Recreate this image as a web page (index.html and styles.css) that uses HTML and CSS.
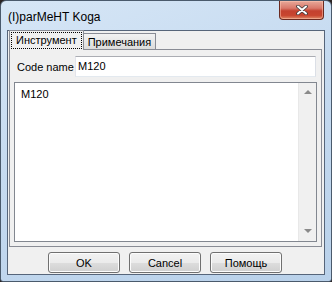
FILE: index.html
```html
<!DOCTYPE html>
<html lang="ru">
<head>
    <meta charset="UTF-8">
    <title>(I)parMeHT Koga</title>
    <link rel="stylesheet" href="styles.css">
</head>
<body>
    <div class="window">
        <div class="titlebar">
            <span class="title">(I)parMeHT Koga</span>
            <div class="close-btn">
                <svg width="12" height="10" viewBox="0 0 12 10">
                    <path d="M2 1.5 L10 8.5 M10 1.5 L2 8.5" stroke="#3b3b3b" stroke-width="3.6" stroke-linecap="round"/>
                    <path d="M2 1.5 L10 8.5 M10 1.5 L2 8.5" stroke="#ffffff" stroke-width="2" stroke-linecap="round"/>
                </svg>
            </div>
        </div>
        <div class="client">
            <div class="tabs">
                <div class="tab active"><span class="focus">Инструмент</span></div>
                <div class="tab">Примечания</div>
            </div>
            <div class="pane">
                <div class="field-row">
                    <label class="label">Code name</label>
                    <div class="edit">M120</div>
                </div>
                <div class="memo">
                    <div class="memo-text">M120</div>
                    <div class="scrollbar">
                        <span class="arrow up"></span>
                        <span class="arrow down"></span>
                    </div>
                </div>
            </div>
            <div class="buttons">
                <button class="btn">OK</button>
                <button class="btn">Cancel</button>
                <button class="btn">Помощь</button>
            </div>
        </div>
    </div>
</body>
</html>
```
FILE: styles.css
```css
html {
    background-color: #2b2424; /* desktop behind the corners */
}

body {
    margin: 0;
    padding: 0;
    font-family: "Liberation Sans", Arial, sans-serif;
    font-size: 11px;
    color: #000;
}

.window {
    width: 330px;
    height: 280px;
    border: 1px solid #4a5a6c;
    border-radius: 6px 6px 3px 3px;
    background: linear-gradient(160deg, #d6e6f6 0%, #c5daf0 45%, #b9d1ea 100%);
    display: flex;
    flex-direction: column;
}

.titlebar {
    height: 29px;
    display: flex;
    justify-content: space-between;
    align-items: flex-start;
}

.title {
    font-size: 12px;
    margin: 9px 0 0 7px;
    color: #000;
}

.close-btn {
    width: 43px;
    height: 18px;
    margin-right: 7px;
    border: 1px solid #6b2a20;
    border-top: none;
    border-radius: 0 0 4px 4px;
    background: linear-gradient(to bottom, #e8a999 0%, #d9786a 40%, #c3412f 55%, #c8452f 80%, #de8a67 100%);
    display: flex;
    justify-content: center;
    align-items: center;
    box-shadow: inset 0 0 0 1px rgba(255, 200, 180, 0.5);
}

.client {
    width: 316px;
    height: 243px;
    margin-left: 6px;
    border: 1px solid #56657a;
    background-color: #f0f0f0;
    display: flex;
    flex-direction: column;
}

.tabs {
    display: flex;
    align-items: flex-end;
    height: 18px;
    margin-left: 1px;
    position: relative;
    z-index: 1;
}

.tab {
    height: 15px;
    padding: 0 4px;
    border: 1px solid #898c95;
    border-bottom: none;
    background: linear-gradient(to bottom, #f2f2f2, #dcdcdc);
    display: flex;
    align-items: center;
    font-size: 11px;
    margin-left: -1px;
}

.tab.active {
    height: 19px;
    margin-bottom: -1px;
    margin-left: 0;
    padding: 0 1px;
    background: #f0f0f0;
}

.focus {
    border: 1px dotted #000;
    padding: 0 4px 1px 4px;
    line-height: 14px;
}

.pane {
    margin: 0 2px 0 1px;
    border: 1px solid #898c95;
    background-color: #f0f0f0;
    display: flex;
    flex-direction: column;
    padding: 6px 4px 4px 4px;
    box-sizing: border-box;
    height: 198px;
}

.field-row {
    display: flex;
    align-items: center;
    height: 21px;
}

.label {
    width: 58px;
    padding-left: 3px;
    white-space: nowrap;
    font-size: 11px;
}

.edit {
    flex: 1;
    height: 19px;
    margin-right: 1px;
    border: 1px solid #abadb3;
    border-color: #abadb3 #dbdfe6 #e3e9ef #e2e3ea;
    background-color: #fff;
    font-size: 11px;
    line-height: 19px;
    padding-left: 2px;
}

.memo {
    flex: 1;
    margin-top: 5px;
    border: 1px solid #828790;
    background-color: #fff;
    display: flex;
}

.memo-text {
    flex: 1;
    padding: 5px 0 0 6px;
    font-size: 11px;
}

.scrollbar {
    width: 17px;
    background-color: #f0f0f0;
    border-left: 1px solid #e8e8e8;
    display: flex;
    flex-direction: column;
    justify-content: space-between;
    align-items: center;
    padding: 7px 0 8px 0;
}

.arrow {
    width: 0;
    height: 0;
    border-left: 4px solid transparent;
    border-right: 4px solid transparent;
}

.arrow.up {
    border-bottom: 4px solid #8a8a8a;
}

.arrow.down {
    border-top: 4px solid #8a8a8a;
}

.buttons {
    display: flex;
    gap: 9px;
    padding: 5px 0 0 40px;
}

.btn {
    width: 72px;
    height: 21px;
    border: 1px solid #707070;
    border-radius: 3px;
    background: linear-gradient(to bottom, #f2f2f2 0%, #ebebeb 50%, #dddddd 51%, #cfcfcf 100%);
    box-shadow: inset 0 0 0 1px #fcfcfc;
    font-family: "Liberation Sans", Arial, sans-serif;
    font-size: 11px;
    font-weight: normal;
    color: #000;
    padding: 0;
}
```
